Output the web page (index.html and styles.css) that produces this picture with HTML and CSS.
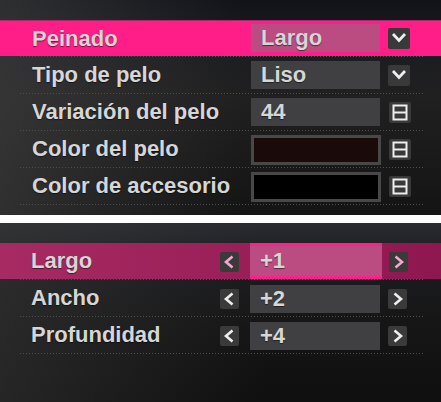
FILE: index.html
```html
<!DOCTYPE html>
<html lang="es">
<head>
    <meta charset="UTF-8">
    <meta name="viewport" content="width=device-width, initial-scale=1.0">
    <title>Peinado</title>
    <link rel="stylesheet" href="styles.css">
</head>
<body>
    <div class="panel panel-top">
        <div class="row active">
            <span class="label">Peinado</span>
            <span class="value">Largo</span>
            <span class="btn">
                <svg width="22" height="21" viewBox="0 0 22 21"><path d="M5 6 L11 12.5 L17 6" fill="none" stroke="#eee" stroke-width="2.8"/></svg>
            </span>
        </div>
        <div class="row">
            <span class="label">Tipo de pelo</span>
            <span class="value">Liso</span>
            <span class="btn">
                <svg width="22" height="21" viewBox="0 0 22 21"><path d="M5 6 L11 12.5 L17 6" fill="none" stroke="#eee" stroke-width="2.8"/></svg>
            </span>
        </div>
        <div class="row">
            <span class="label">Variación del pelo</span>
            <span class="value">44</span>
            <span class="btn">
                <svg width="22" height="21" viewBox="0 0 22 21"><rect x="4.5" y="3.5" width="13" height="14" fill="none" stroke="#eee" stroke-width="2"/><path d="M4.5 10.5 H17.5" stroke="#eee" stroke-width="2"/></svg>
            </span>
        </div>
        <div class="row">
            <span class="label">Color del pelo</span>
            <span class="swatch" style="background:#1a0a0a"></span>
            <span class="btn">
                <svg width="22" height="21" viewBox="0 0 22 21"><rect x="4.5" y="3.5" width="13" height="14" fill="none" stroke="#eee" stroke-width="2"/><path d="M4.5 10.5 H17.5" stroke="#eee" stroke-width="2"/></svg>
            </span>
        </div>
        <div class="row">
            <span class="label">Color de accesorio</span>
            <span class="swatch" style="background:#000"></span>
            <span class="btn">
                <svg width="22" height="21" viewBox="0 0 22 21"><rect x="4.5" y="3.5" width="13" height="14" fill="none" stroke="#eee" stroke-width="2"/><path d="M4.5 10.5 H17.5" stroke="#eee" stroke-width="2"/></svg>
            </span>
        </div>
    </div>

    <div class="divider"></div>

    <div class="panel panel-bottom">
        <div class="row stepper active">
            <span class="label">Largo</span>
            <span class="arrow">
                <svg width="19" height="20" viewBox="0 0 19 20"><path d="M12.5 4.5 L6 10 L12.5 15.5" fill="none" stroke="#f4a6cc" stroke-width="2.6"/></svg>
            </span>
            <span class="value">+1</span>
            <span class="arrow">
                <svg width="19" height="20" viewBox="0 0 19 20"><path d="M6.5 4.5 L13 10 L6.5 15.5" fill="none" stroke="#f4a6cc" stroke-width="2.6"/></svg>
            </span>
        </div>
        <div class="row stepper">
            <span class="label">Ancho</span>
            <span class="arrow">
                <svg width="19" height="20" viewBox="0 0 19 20"><path d="M12.5 4.5 L6 10 L12.5 15.5" fill="none" stroke="#eee" stroke-width="2.6"/></svg>
            </span>
            <span class="value">+2</span>
            <span class="arrow">
                <svg width="19" height="20" viewBox="0 0 19 20"><path d="M6.5 4.5 L13 10 L6.5 15.5" fill="none" stroke="#eee" stroke-width="2.6"/></svg>
            </span>
        </div>
        <div class="row stepper">
            <span class="label">Profundidad</span>
            <span class="arrow">
                <svg width="19" height="20" viewBox="0 0 19 20"><path d="M12.5 4.5 L6 10 L12.5 15.5" fill="none" stroke="#eee" stroke-width="2.6"/></svg>
            </span>
            <span class="value">+4</span>
            <span class="arrow">
                <svg width="19" height="20" viewBox="0 0 19 20"><path d="M6.5 4.5 L13 10 L6.5 15.5" fill="none" stroke="#eee" stroke-width="2.6"/></svg>
            </span>
        </div>
    </div>
</body>
</html>
```

FILE: styles.css
```css
body {
    margin: 0;
    width: 441px;
    height: 402px;
    overflow: hidden;
    background: #111;
    font-family: "Liberation Sans", Arial, sans-serif;
    font-weight: bold;
    font-size: 22px;
    color: #d6d6d6;
}

.panel {
    box-sizing: border-box;
}

.panel-top {
    height: 215px;
    padding-top: 20px;
    background:
        linear-gradient(90deg, rgba(70,70,70,0.55), rgba(0,0,0,0) 55%),
        linear-gradient(180deg, #121319 0, #1b1c20 20%, #202020 45%, #141414 100%);
}

.divider {
    height: 8px;
    background: #fff;
}

.panel-bottom {
    height: 179px;
    padding-top: 20px;
    background:
        linear-gradient(90deg, rgba(60,60,60,0.5), rgba(0,0,0,0) 60%),
        linear-gradient(180deg, #2a2b30 0, #1c1d21 20%, #161616 55%, #0f0f0f 100%);
}

/* each row: 36px content + 1px dotted rule */
.row {
    display: flex;
    align-items: flex-start;
    height: 37px;
    line-height: 36px;
    text-shadow: 0 1px 1px rgba(0,0,0,0.5);
    background:
        repeating-linear-gradient(90deg, #4e4e4e 0 1px, transparent 1px 3px) 20px 36px / 403px 1px no-repeat;
}

.row > * {
    flex: none;
}

.row svg {
    display: block;
}

.panel-top .row.active {
    border-top: 1px solid #a8286a;
    line-height: 35px;
    background:
        repeating-linear-gradient(90deg, #4e4e4e 0 1px, transparent 1px 3px) 20px 35px / 403px 1px no-repeat,
        linear-gradient(#ff1e87, #ff1e87) 0 0 / 100% 35px no-repeat;
}

.panel-top .row.active + .row {
    margin-top: -1px;
}

.label {
    width: 251px;
    padding-left: 32px;
    box-sizing: border-box;
    white-space: nowrap;
}

.value {
    width: 129px;
    height: 28px;
    margin-top: 4px;
    padding-left: 10px;
    box-sizing: border-box;
    line-height: 28px;
    background: #404042;
}

.row.active .value {
    background: #bb4c81;
    margin-top: 3px;
}

.swatch {
    width: 130px;
    height: 30px;
    margin-top: 4px;
    border: 3px solid #484848;
    box-sizing: border-box;
}

.btn {
    width: 22px;
    height: 21px;
    margin-top: 8px;
    margin-left: 8px;
    background: #393939;
    border-radius: 2px;
}

.row.active .btn {
    margin-top: 7px;
}

.panel-top .row:nth-child(3) .btn {
    margin-left: 9px;
}

/* stepper rows in the lower panel */
.stepper .label {
    width: 220px;
    padding-left: 31px;
}

.stepper .value {
    width: 130px;
    margin-left: 11px;
    margin-top: 5px;
}

.arrow {
    width: 19px;
    height: 20px;
    margin-top: 9px;
    background: #3a3a3a;
    border-radius: 2px;
}

.stepper .value + .arrow {
    margin-left: 8px;
}

.panel-bottom .row.active {
    background:
        repeating-linear-gradient(90deg, #4e4e4e 0 1px, transparent 1px 3px) 20px 36px / 403px 1px no-repeat,
        linear-gradient(90deg, #a82a62, #8f1750) 0 0 / 100% 36px no-repeat;
}

.panel-bottom .row.active .value {
    width: 132px;
    height: 36px;
    margin-top: 0;
    margin-left: 11px;
    line-height: 30px;
    border-top: 3px solid #ff1f8a;
    border-bottom: 3px solid #ff1f8a;
    background: #bb4c81;
}

.panel-bottom .row.active .value + .arrow {
    margin-left: 7px;
}
```
